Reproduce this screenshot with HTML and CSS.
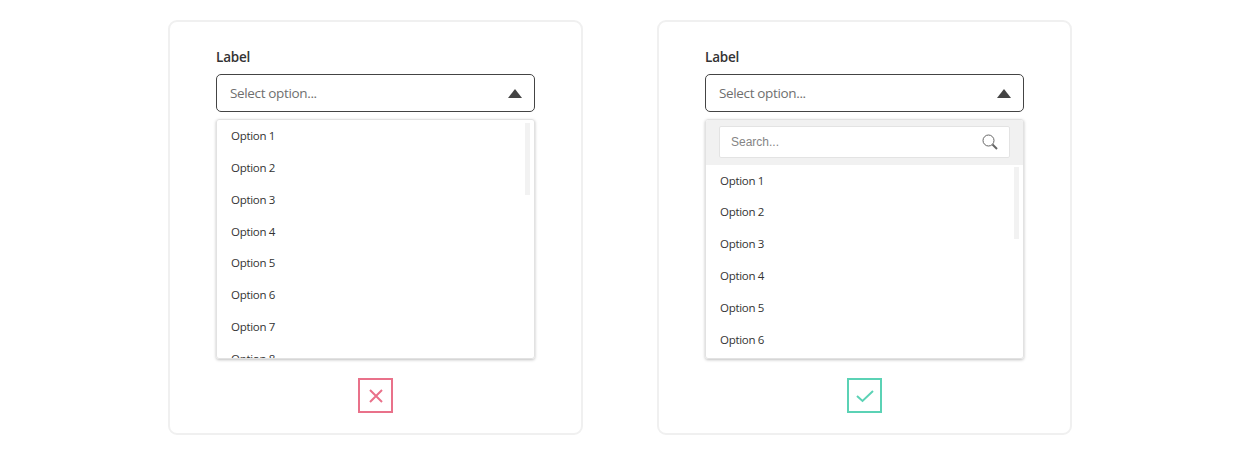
FILE: index.html
```html
<!DOCTYPE html>
<html lang="en">
<head>
  <meta charset="UTF-8" />
  <title>Dropdown search</title>
  <link rel="stylesheet" href="styles.css">
</head>
<body>
  <div class="card">
    <div class="label">Label</div>
    <div class="select">
      <span>Select option...</span>
      <span class="arrow"></span>
    </div>
    <div class="panel">
      <div class="thumb"></div>
      <div class="option">Option 1</div>
      <div class="option">Option 2</div>
      <div class="option">Option 3</div>
      <div class="option">Option 4</div>
      <div class="option">Option 5</div>
      <div class="option">Option 6</div>
      <div class="option">Option 7</div>
      <div class="option">Option 8</div>
    </div>
    <div class="mark bad">
      <svg width="16" height="16" viewBox="0 0 16 16"><path d="M2 2 L14 14 M14 2 L2 14" /></svg>
    </div>
  </div>

  <div class="card">
    <div class="label">Label</div>
    <div class="select">
      <span>Select option...</span>
      <span class="arrow"></span>
    </div>
    <div class="panel">
      <div class="search">
        <div class="search-box">
          <span>Search...</span>
          <svg width="16" height="16" viewBox="0 0 16 16"><circle cx="6.5" cy="6.5" r="5.5" /><path d="M10.5 10.5 L15 15" /></svg>
        </div>
      </div>
      <div class="thumb thumb-low"></div>
      <div class="option">Option 1</div>
      <div class="option">Option 2</div>
      <div class="option">Option 3</div>
      <div class="option">Option 4</div>
      <div class="option">Option 5</div>
      <div class="option">Option 6</div>
    </div>
    <div class="mark good">
      <svg width="20" height="16" viewBox="0 0 20 16"><path d="M2 8 L7.5 13 L18 3" /></svg>
    </div>
  </div>
</body>
</html>
```

FILE: styles.css
```css
body {
  margin: 0;
  height: 454px;
  background: #fff;
  font-family: "Open Sans", sans-serif;
  display: flex;
  justify-content: center;
  align-items: flex-start;
  gap: 74px;
  overflow: hidden;
}

.card {
  width: 415px;
  height: 415px;
  margin-top: 20px;
  padding: 26px 46px 0;
  box-sizing: border-box;
  border: 2px solid #f0f0f0;
  border-radius: 9px;
  display: flex;
  flex-direction: column;
}

.label {
  font-size: 13.5px;
  font-weight: 600;
  letter-spacing: -0.2px;
  line-height: 18px;
  color: #333;
}

.select {
  height: 38px;
  margin-top: 8px;
  padding: 0 12px 0 13px;
  box-sizing: border-box;
  border: 1px solid #444;
  border-radius: 5px;
  display: flex;
  justify-content: space-between;
  align-items: center;
  font-size: 13.5px;
  letter-spacing: -0.35px;
  color: #6f6f6f;
}

.arrow {
  width: 0;
  height: 0;
  border-left: 7px solid transparent;
  border-right: 7px solid transparent;
  border-bottom: 9px solid #444;
}

.panel {
  position: relative;
  height: 240px;
  margin-top: 7px;
  box-sizing: border-box;
  border: 1px solid #e2e2e2;
  border-radius: 3px;
  box-shadow: 0 1px 3px rgba(0, 0, 0, 0.25);
  overflow: hidden;
}

.option {
  height: 31.85px;
  padding-left: 14px;
  font-size: 11.5px;
  letter-spacing: -0.3px;
  line-height: 31.85px;
  color: #333;
}

.thumb {
  position: absolute;
  top: 3px;
  right: 4px;
  width: 5px;
  height: 72px;
  background: #f2f2f2;
}

.thumb-low {
  top: 47px;
}

.search {
  height: 44.5px;
  padding: 6px 13px;
  box-sizing: border-box;
  background: #f1f1f1;
}

.search-box {
  height: 32px;
  padding: 0 11px;
  box-sizing: border-box;
  background: #fff;
  border: 1px solid #e3e3e3;
  border-radius: 2px;
  display: flex;
  justify-content: space-between;
  align-items: center;
  font-family: "Liberation Sans", sans-serif;
  font-size: 12px;
  color: #858585;
}

.search-box svg {
  fill: none;
  stroke: #666;
  stroke-width: 1;
}

.search-box svg path {
  stroke-width: 2;
}

.mark {
  width: 35px;
  height: 35px;
  margin: 19px auto 0;
  box-sizing: border-box;
  border: 2px solid;
  display: flex;
  justify-content: center;
  align-items: center;
}

.mark svg {
  fill: none;
  stroke: currentColor;
  stroke-width: 2;
}

.bad {
  color: #e9718a;
}

.good {
  color: #5bd2b5;
}
```
